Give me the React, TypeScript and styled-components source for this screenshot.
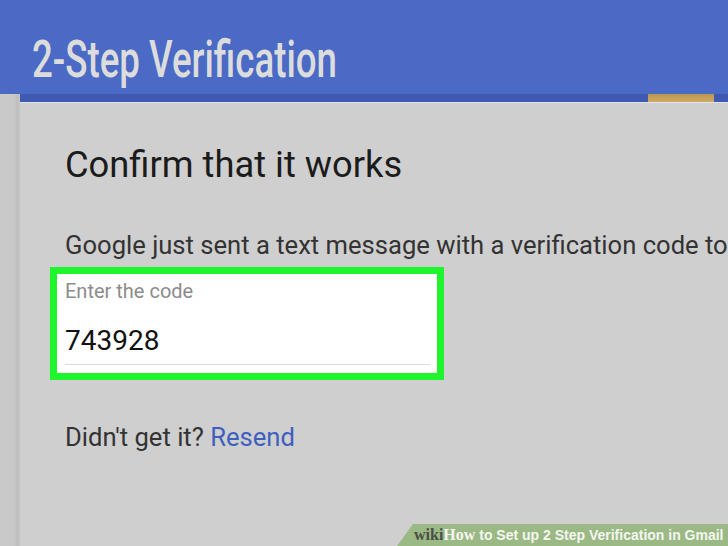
import styled, { createGlobalStyle } from 'styled-components';

const GlobalStyle = createGlobalStyle`
    html, body {
        margin: 0;
        padding: 0;
        background: #cfcfcf;
        overflow: hidden;
    }
    body {
        font-family: Roboto, "Noto Sans", sans-serif;
    }
`;

const Page = styled.div`
    position: relative;
    width: 728px;
    height: 546px;
    display: flex;
    flex-direction: column;
    overflow: hidden;
`;

const Header = styled.header`
    height: 94px;
    flex-shrink: 0;
    background: #4a6ac5;
    padding: 29px 0 0 32px;
    box-sizing: border-box;
`;

const HeaderTitle = styled.h1`
    margin: 0;
    font-size: 52px;
    line-height: 62px;
    font-weight: 500;
    color: #dcdcdc;
    white-space: nowrap;
    transform: scaleX(0.705);
    transform-origin: left center;
`;

const Body = styled.div`
    flex: 1;
    display: flex;
`;

const Gutter = styled.div`
    width: 18px;
    flex-shrink: 0;
    background: linear-gradient(to right, #c9c9c9 0, #c9c9c9 14px, #bcbcbc 18px);
    border-right: 2px solid #c3c3c3;
`;

const Panel = styled.main`
    flex: 1;
    display: flex;
    flex-direction: column;
    min-width: 0;
`;

const TopStrip = styled.div`
    height: 8px;
    display: flex;
    justify-content: flex-end;
    background: #3e5bb1;
    border-bottom: 1px solid #dfe5f4;
`;

const StripTab = styled.div`
    width: 66px;
    margin-right: 14px;
    background: linear-gradient(#b99650, #d0aa62);
`;

const Content = styled.section`
    padding: 40px 0 0 45px;
    display: flex;
    flex-direction: column;
`;

const Title = styled.h2`
    margin: 0;
    font-size: 36.3px;
    line-height: 44px;
    font-weight: 400;
    color: #1b1b1b;
    white-space: nowrap;
`;

const Text = styled.p<{ $top: number }>`
    margin: ${p => p.$top}px 0 0;
    font-size: 25.6px;
    line-height: 30px;
    color: #333333;
    white-space: nowrap;
`;

const Link = styled.a`
    color: #3f5fc0;
    text-decoration: none;
`;

const CodeBox = styled.div`
    margin: 7px 0 0 -15px;
    width: 394px;
    height: 113px;
    border: 7px solid #1ff52d;
    background: #ffffff;
    padding: 5px 7px 0 8px;
    box-sizing: border-box;
    display: flex;
    flex-direction: column;
`;

const Label = styled.label`
    font-size: 20px;
    line-height: 24px;
    color: #8c8c8c;
`;

const Value = styled.div`
    margin-top: 21px;
    font-size: 28px;
    line-height: 34px;
    color: #111111;
`;

const Underline = styled.div`
    margin-top: 6px;
    height: 1px;
    background: #dadada;
`;

const Banner = styled.div`
    position: absolute;
    right: 0;
    bottom: 0;
    width: 331px;
    height: 22px;
    padding-left: 17px;
    box-sizing: border-box;
    background: #9bb985;
    clip-path: polygon(16px 0, 100% 0, 100% 100%, 0 100%);
    display: flex;
    align-items: center;
    white-space: nowrap;
    font-family: "Liberation Sans", Arial, sans-serif;
    font-weight: 700;
    font-size: 14px;
    color: #f4f6f1;
`;

const Wiki = styled.span<{ $light?: boolean }>`
    font-family: "Liberation Serif", "Times New Roman", serif;
    font-size: 16px;
    color: ${p => (p.$light ? '#f4f6f1' : '#4a4e47')};
`;

export default function App() {
    return (
        <Page>
            <GlobalStyle />
            <Header>
                <HeaderTitle>2-Step Verification</HeaderTitle>
            </Header>
            <Body>
                <Gutter />
                <Panel>
                    <TopStrip>
                        <StripTab />
                    </TopStrip>
                    <Content>
                        <Title>Confirm that it works</Title>
                        <Text $top={43}>Google just sent a text message with a verification code to</Text>
                        <CodeBox>
                            <Label>Enter the code</Label>
                            <Value>743928</Value>
                            <Underline />
                        </CodeBox>
                        <Text $top={42}>
                            Didn't get it? <Link>Resend</Link>
                        </Text>
                    </Content>
                </Panel>
            </Body>
            <Banner>
                <Wiki>wiki</Wiki>
                <Wiki $light>How</Wiki>
                &nbsp;to Set up 2 Step Verification in Gmail
            </Banner>
        </Page>
    );
}
